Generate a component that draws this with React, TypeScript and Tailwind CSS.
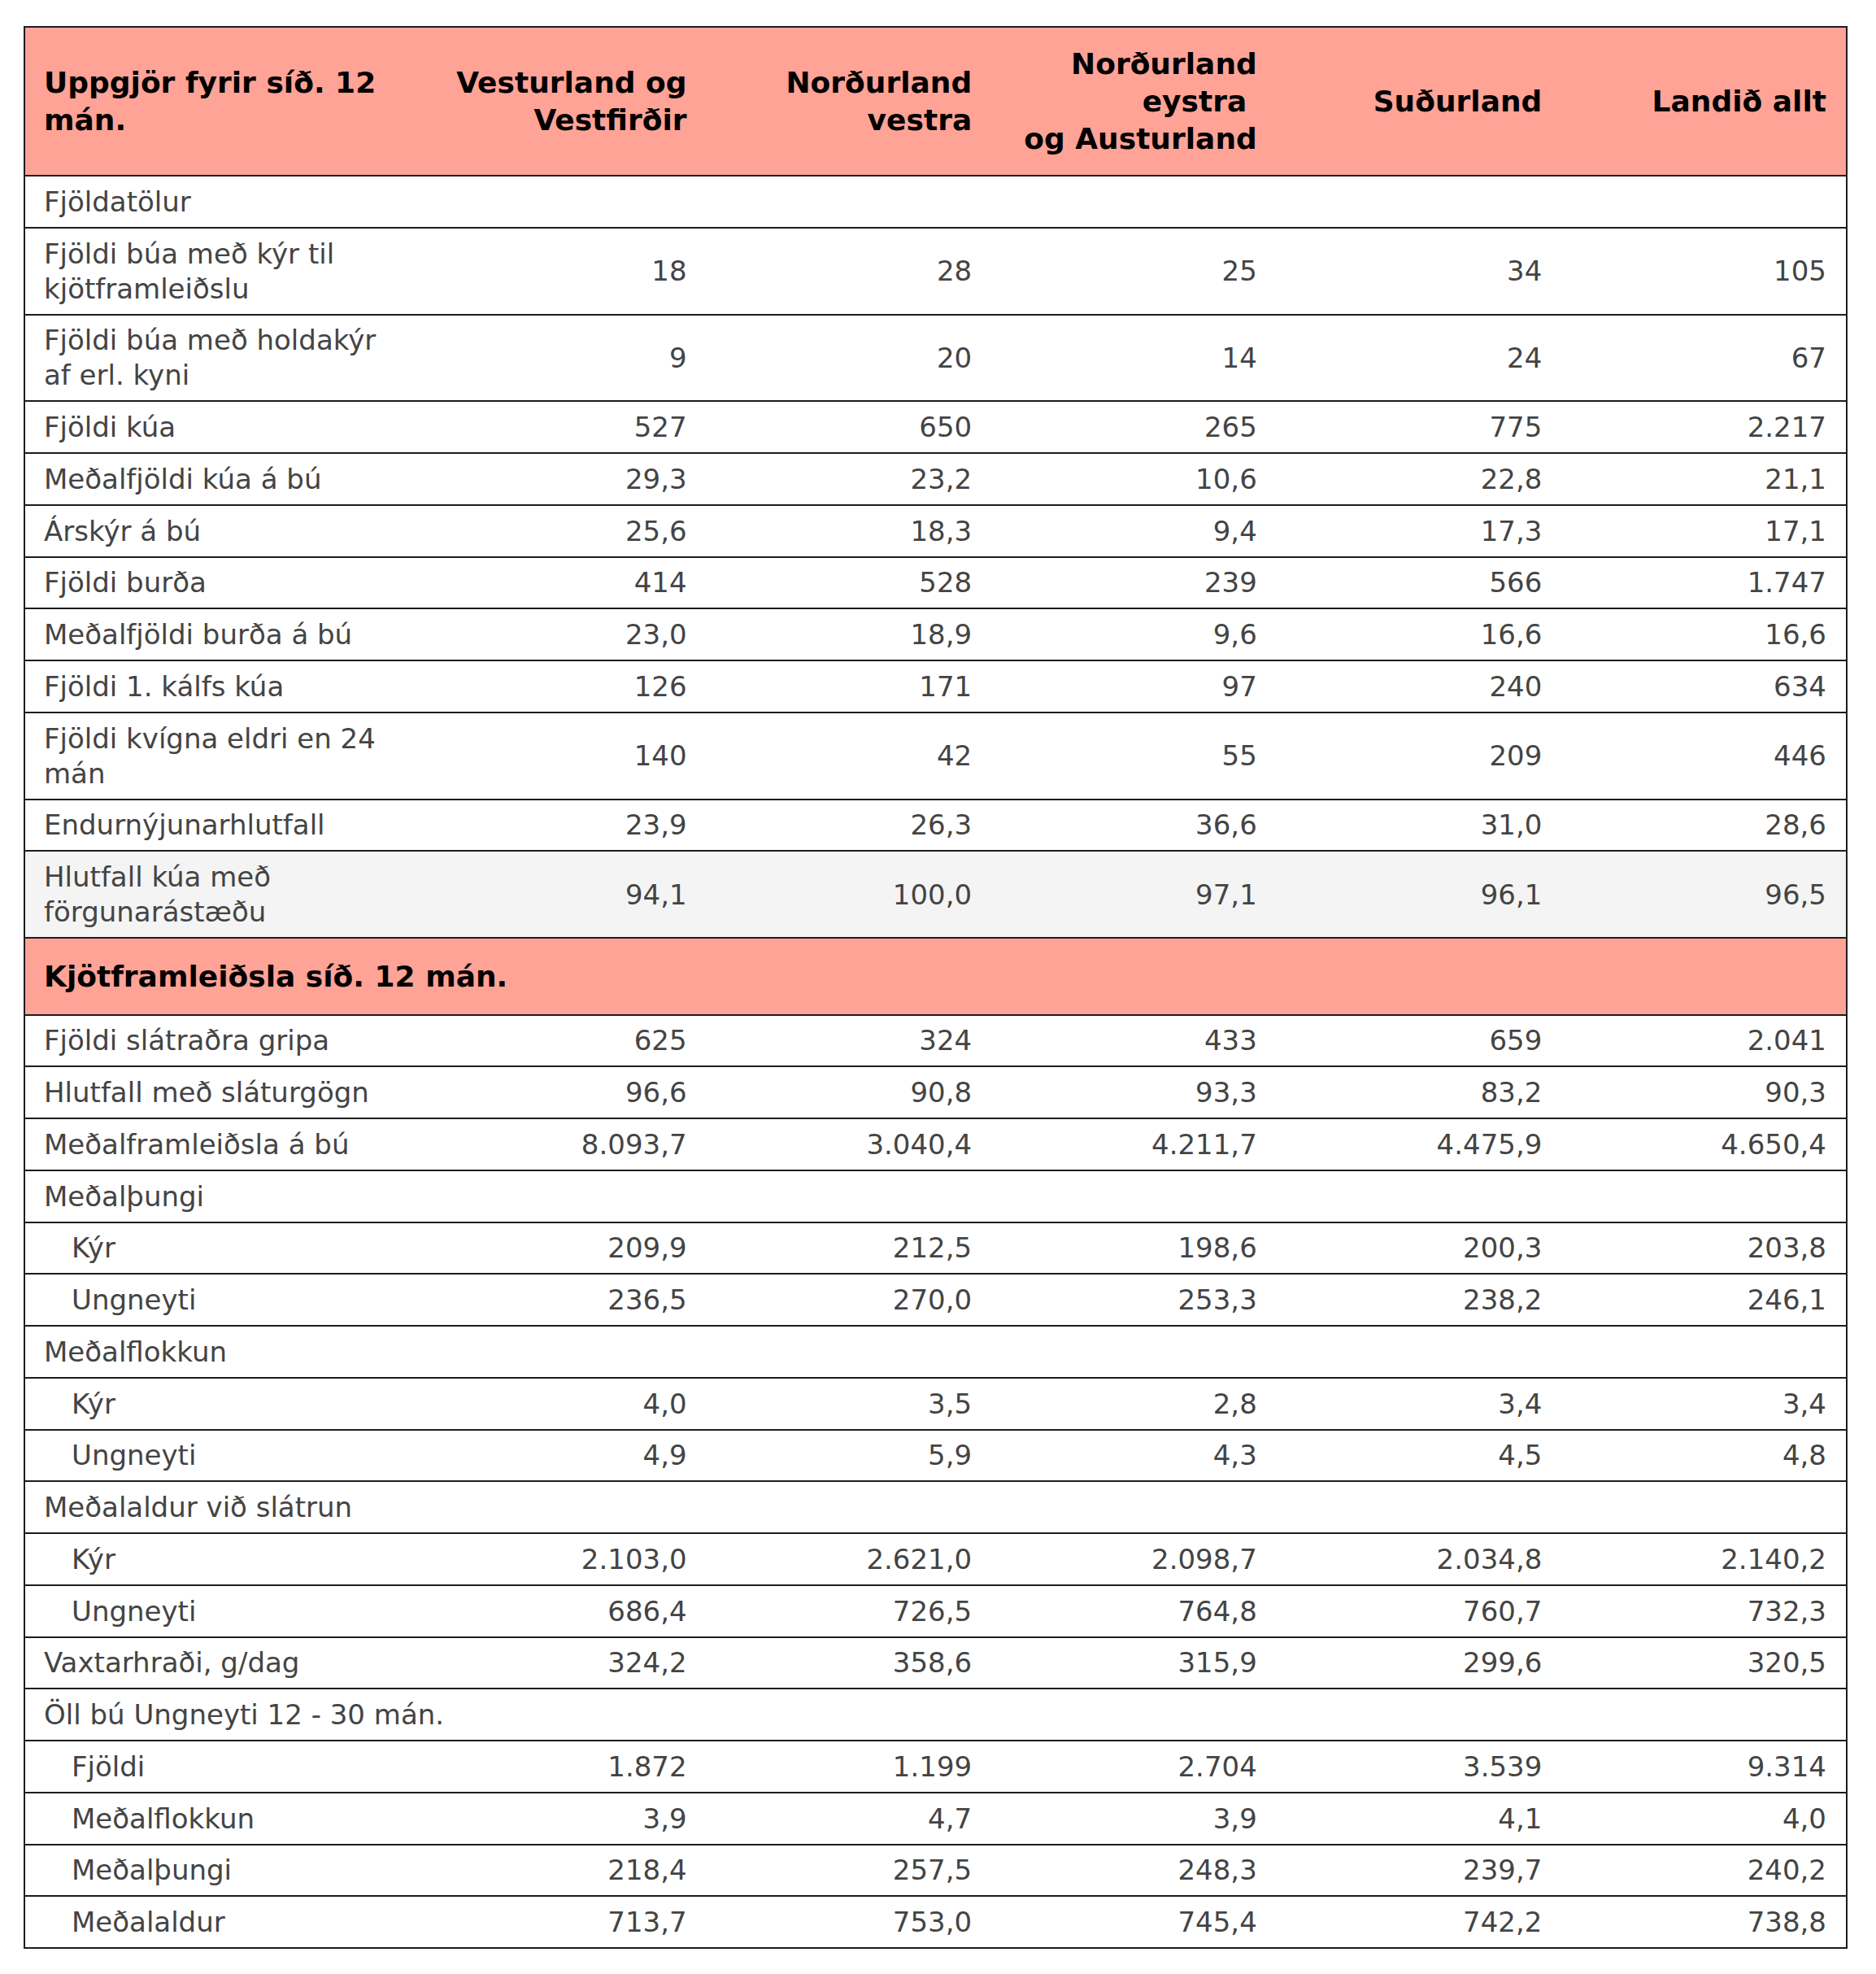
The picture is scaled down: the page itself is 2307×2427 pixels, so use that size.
import React from 'react';

type Row = {
  label: string;
  values?: string[];
  indent?: boolean;
  shaded?: boolean;
};

const headers = [
  'Vesturland og Vestfirðir',
  'Norðurland vestra',
  'Norðurland eystra\u00a0\nog Austurland',
  'Suðurland',
  'Landið allt',
];

const fjoldatolur: Row[] = [
  { label: 'Fjöldatölur' },
  { label: 'Fjöldi búa með kýr til kjötframleiðslu', values: ['18', '28', '25', '34', '105'] },
  { label: 'Fjöldi búa með holdakýr af erl. kyni', values: ['9', '20', '14', '24', '67'] },
  { label: 'Fjöldi kúa', values: ['527', '650', '265', '775', '2.217'] },
  { label: 'Meðalfjöldi kúa á bú', values: ['29,3', '23,2', '10,6', '22,8', '21,1'] },
  { label: 'Árskýr á bú', values: ['25,6', '18,3', '9,4', '17,3', '17,1'] },
  { label: 'Fjöldi burða', values: ['414', '528', '239', '566', '1.747'] },
  { label: 'Meðalfjöldi burða á bú', values: ['23,0', '18,9', '9,6', '16,6', '16,6'] },
  { label: 'Fjöldi 1. kálfs kúa', values: ['126', '171', '97', '240', '634'] },
  { label: 'Fjöldi kvígna eldri en 24 mán', values: ['140', '42', '55', '209', '446'] },
  { label: 'Endurnýjunarhlutfall', values: ['23,9', '26,3', '36,6', '31,0', '28,6'] },
  { label: 'Hlutfall kúa með förgunarástæðu', values: ['94,1', '100,0', '97,1', '96,1', '96,5'], shaded: true },
];

const kjot: Row[] = [
  { label: 'Fjöldi slátraðra gripa', values: ['625', '324', '433', '659', '2.041'] },
  { label: 'Hlutfall með sláturgögn', values: ['96,6', '90,8', '93,3', '83,2', '90,3'] },
  { label: 'Meðalframleiðsla á bú', values: ['8.093,7', '3.040,4', '4.211,7', '4.475,9', '4.650,4'] },
  { label: 'Meðalþungi' },
  { label: 'Kýr', values: ['209,9', '212,5', '198,6', '200,3', '203,8'], indent: true },
  { label: 'Ungneyti', values: ['236,5', '270,0', '253,3', '238,2', '246,1'], indent: true },
  { label: 'Meðalflokkun' },
  { label: 'Kýr', values: ['4,0', '3,5', '2,8', '3,4', '3,4'], indent: true },
  { label: 'Ungneyti', values: ['4,9', '5,9', '4,3', '4,5', '4,8'], indent: true },
  { label: 'Meðalaldur við slátrun' },
  { label: 'Kýr', values: ['2.103,0', '2.621,0', '2.098,7', '2.034,8', '2.140,2'], indent: true },
  { label: 'Ungneyti', values: ['686,4', '726,5', '764,8', '760,7', '732,3'], indent: true },
  { label: 'Vaxtarhraði, g/dag', values: ['324,2', '358,6', '315,9', '299,6', '320,5'] },
  { label: 'Öll bú Ungneyti 12 - 30 mán.' },
  { label: 'Fjöldi', values: ['1.872', '1.199', '2.704', '3.539', '9.314'], indent: true },
  { label: 'Meðalflokkun', values: ['3,9', '4,7', '3,9', '4,1', '4,0'], indent: true },
  { label: 'Meðalþungi', values: ['218,4', '257,5', '248,3', '239,7', '240,2'], indent: true },
  { label: 'Meðalaldur', values: ['713,7', '753,0', '745,4', '742,2', '738,8'], indent: true },
];

// only horizontal rules inside, outer frame on the sides
const cell = 'border-y-2 border-[#1c1c1c] pt-[9.75px] pb-[9px] align-middle';

function DataRow({ row }: { row: Row }) {
  const bg = row.shaded ? 'bg-[#f4f4f4]' : 'bg-white';
  if (!row.values) {
    return (
      <tr className={bg}>
        <td colSpan={6} className={`${cell} border-x-2 pl-[23px] pr-[24px] text-left`}>
          {row.label}
        </td>
      </tr>
    );
  }
  return (
    <tr className={bg}>
      <td className={`${cell} border-l-2 ${row.indent ? 'pl-[57px]' : 'pl-[23px]'} pr-[24px] text-left`}>{row.label}</td>
      {row.values.map((v, i) => (
        <td key={i} className={`${cell} ${i === 4 ? 'border-r-2' : ''} pl-[24px] pr-[24px] text-right`}>
          {v}
        </td>
      ))}
    </tr>
  );
}

export default function App() {
  return (
    <div className="min-h-screen bg-white pt-[32px] pl-[29px] pb-[32px]">
      <table
        className="table-fixed border-collapse w-[2241px] text-[34px] leading-[43px] text-[#444444]"
        style={{ fontFamily: '"DejaVu Sans", Verdana, sans-serif' }}
      >
        <colgroup>
          <col className="w-[488px]" />
          <col className="w-[350.6px]" />
          <col className="w-[350.6px]" />
          <col className="w-[350.6px]" />
          <col className="w-[350.6px]" />
          <col className="w-[350.6px]" />
        </colgroup>
        <thead>
          <tr className="bg-[#ffa396] text-black text-[36px] leading-[46px]">
            <th className="border-y-2 border-l-2 border-[#1c1c1c] py-[21.5px] pl-[23px] pr-[24px] text-left align-middle font-bold">
              Uppgjör fyrir síð. 12 mán.
            </th>
            {headers.map((h, i) => (
              <th
                key={i}
                className={`border-y-2 ${i === 4 ? 'border-r-2' : ''} border-[#1c1c1c] py-[21.5px] pl-[20px] pr-[24px] text-right align-middle font-bold whitespace-pre-line`}
              >
                {h}
              </th>
            ))}
          </tr>
        </thead>
        <tbody>
          {fjoldatolur.map((r, i) => (
            <DataRow key={'a' + i} row={r} />
          ))}
          <tr className="bg-[#ffa396]">
            <td
              colSpan={6}
              className="border-2 border-[#1c1c1c] py-[24.75px] pl-[23px] pr-[24px] text-left text-[36px] font-bold text-black"
            >
              Kjötframleiðsla síð. 12 mán.
            </td>
          </tr>
          {kjot.map((r, i) => (
            <DataRow key={'b' + i} row={r} />
          ))}
        </tbody>
      </table>
    </div>
  );
}
